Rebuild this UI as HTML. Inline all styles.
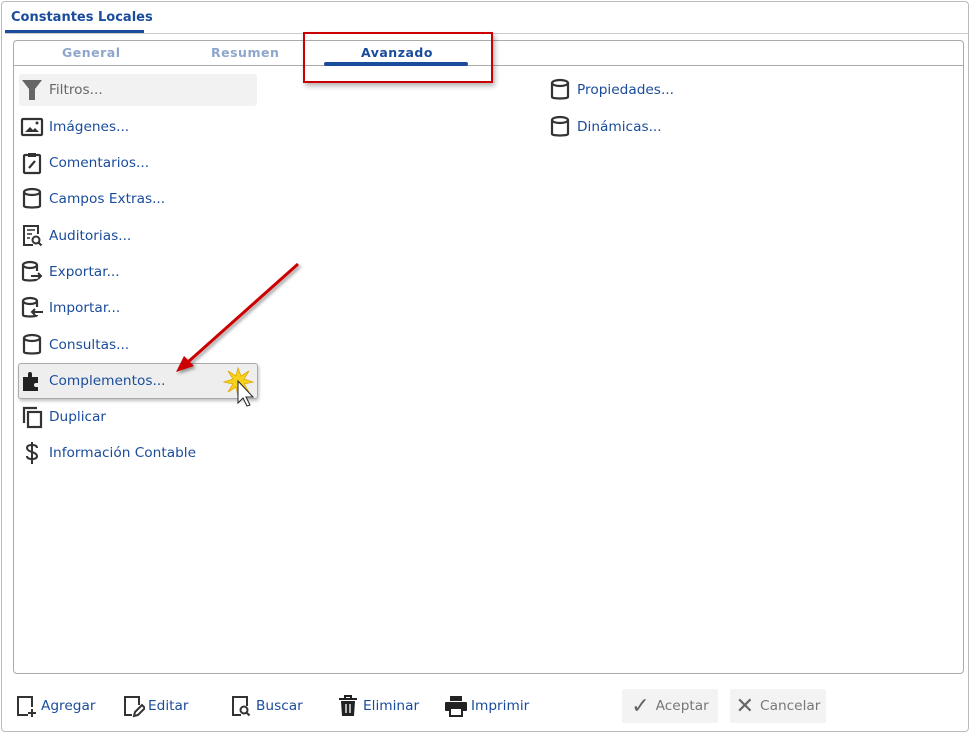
<!DOCTYPE html>
<html><head><meta charset="utf-8"><style>
body{margin:0;width:970px;height:733px;background:#fff;font-family:"DejaVu Sans","Liberation Sans",sans-serif;position:relative;overflow:hidden}
.frame{position:absolute;left:1px;top:1px;width:966px;height:729px;border:1px solid #bbb;border-radius:4px}
.ttl{position:absolute;left:11px;top:10px;font-size:13px;font-weight:bold;color:#1a4c9c}
.ttlbar{position:absolute;left:5px;top:30px;width:139px;height:3px;background:#1a4c9c}
.sep{position:absolute;left:5px;top:33px;width:963px;height:1px;background:#ccc}
.panel{position:absolute;left:13px;top:40px;width:949px;height:632px;border:1px solid #aaa;border-radius:4px}
.tabline{position:absolute;left:14px;top:65px;width:949px;height:1px;background:#aaa}
.tab{position:absolute;top:45px;font-size:12.5px;font-weight:bold;letter-spacing:0.5px}
.item{position:absolute;left:19px;height:32px;width:238px;display:flex;align-items:center;font-size:13.7px;color:#1a4c9c}
.item svg{width:24px;height:24px;margin:0 5px 0 1px;flex:none}
.btn{position:absolute;top:690px;height:32px;display:flex;align-items:center;font-size:13.7px;color:#1a4c9c}
.btn svg{width:24px;height:24px;margin-right:3px}
</style></head><body>
<div class="frame"></div>
<div class="ttl">Constantes Locales</div>
<div class="ttlbar"></div>
<div class="sep"></div>
<div class="panel"></div>
<div class="tabline"></div>
<div class="tab" style="left:62px;color:#8fa6cc">General</div>
<div class="tab" style="left:211px;color:#8fa6cc">Resumen</div>
<div class="tab" style="left:361px;color:#1a4c9c">Avanzado</div>
<div style="position:absolute;left:324px;top:62px;width:144px;height:4px;background:#1a4c9c;border-radius:2px"></div>
<div style="position:absolute;left:303px;top:32px;width:186px;height:47px;border:2px solid #c00;box-shadow:2px 3px 5px rgba(0,0,0,.3)"></div>

<div class="item" style="top:74px;background:#f2f2f2;border-radius:3px;color:#666"><svg viewBox="0 0 24 24"><path d="M2 2h20l-7 9v11h-6V11z" fill="#666"/></svg>Filtros...</div>
<div class="item" style="top:111px"><svg viewBox="0 0 24 24"><rect x="2" y="4" width="20" height="16" rx="1" fill="none" stroke="#333" stroke-width="2.2"/><path d="M5 17l5-5 3 3 2-2 4 4z" fill="#333"/><circle cx="17" cy="8" r="1.5" fill="#333"/></svg>Imágenes...</div>
<div class="item" style="top:147px"><svg viewBox="0 0 24 24"><rect x="4" y="4" width="16" height="18" rx="1" fill="none" stroke="#333" stroke-width="2.2"/><rect x="8" y="2" width="8" height="4" fill="#333"/><path d="M9 17l6-7" stroke="#333" stroke-width="2.2"/></svg>Comentarios...</div>
<div class="item" style="top:183px"><svg viewBox="0 0 24 24"><ellipse cx="12" cy="5" rx="8" ry="3" fill="none" stroke="#333" stroke-width="2.2"/><path d="M4 5v14c0 2 16 2 16 0V5" fill="none" stroke="#333" stroke-width="2.2"/></svg>Campos Extras...</div>
<div class="item" style="top:220px"><svg viewBox="0 0 24 24"><path d="M13 21H4V2h14v8" fill="none" stroke="#333" stroke-width="2"/><path d="M7 6h8M7 10h5M7 14h3" stroke="#333" stroke-width="1.6"/><circle cx="16" cy="16" r="3.5" fill="none" stroke="#333" stroke-width="2"/><path d="M18.5 18.5l3 3" stroke="#333" stroke-width="2"/></svg>Auditorias...</div>
<div class="item" style="top:256px"><svg viewBox="0 0 24 24"><ellipse cx="10" cy="5" rx="7" ry="3" fill="none" stroke="#333" stroke-width="2.2"/><path d="M3 5v14c0 2 14 2 14 0M17 5v6" fill="none" stroke="#333" stroke-width="2.2"/><path d="M11 16h10M18 13l3 3-3 3" fill="none" stroke="#333" stroke-width="2"/></svg>Exportar...</div>
<div class="item" style="top:292px"><svg viewBox="0 0 24 24"><ellipse cx="10" cy="5" rx="7" ry="3" fill="none" stroke="#333" stroke-width="2.2"/><path d="M3 5v14c0 2 14 2 14 0M17 5v6" fill="none" stroke="#333" stroke-width="2.2"/><path d="M12 16h11M15 13l-3 3 3 3" fill="none" stroke="#333" stroke-width="2"/></svg>Importar...</div>
<div class="item" style="top:329px"><svg viewBox="0 0 24 24"><ellipse cx="12" cy="5" rx="8" ry="3" fill="none" stroke="#333" stroke-width="2.2"/><path d="M4 5v14c0 2 16 2 16 0V5" fill="none" stroke="#333" stroke-width="2.2"/></svg>Consultas...</div>
<div class="item" style="top:363px;height:34px;background:#eee;border:1px solid #aaa;border-radius:3px;box-shadow:1px 2px 3px rgba(0,0,0,.25);left:18px"><svg viewBox="0 0 24 24"><path d="M3 8h5V5a2 2 0 014 0v3h6v6h-2a2 2 0 000 4h2v4H3z" fill="#222"/></svg>Complementos...</div>
<div class="item" style="top:401px"><svg viewBox="0 0 24 24"><path d="M4 18V3h13" fill="none" stroke="#333" stroke-width="2.2"/><rect x="8" y="7" width="13" height="15" fill="none" stroke="#333" stroke-width="2.2"/></svg>Duplicar</div>
<div class="item" style="top:437px"><svg viewBox="0 0 24 24"><path d="M17 7c0-2-2-3-5-3s-5 1-5 3 2 3 5 4 5 2 5 4-2 3-5 3-5-1-5-3M12 1v22" fill="none" stroke="#333" stroke-width="2"/></svg>Información Contable</div>

<div class="item" style="top:74px;left:547px"><svg viewBox="0 0 24 24"><ellipse cx="12" cy="5" rx="8" ry="3" fill="none" stroke="#333" stroke-width="2.2"/><path d="M4 5v14c0 2 16 2 16 0V5" fill="none" stroke="#333" stroke-width="2.2"/></svg>Propiedades...</div>
<div class="item" style="top:111px;left:547px"><svg viewBox="0 0 24 24"><ellipse cx="12" cy="5" rx="8" ry="3" fill="none" stroke="#333" stroke-width="2.2"/><path d="M4 5v14c0 2 16 2 16 0V5" fill="none" stroke="#333" stroke-width="2.2"/></svg>Dinámicas...</div>

<svg style="position:absolute;left:0;top:0" width="970" height="733">
<defs><filter id="s"><feDropShadow dx="2" dy="2" stdDeviation="1.5" flood-opacity=".4"/></filter></defs>
<g filter="url(#s)"><path d="M298 264L188 362" stroke="#c00" stroke-width="3"/><path d="M176 372l8-16 10 10z" fill="#c00"/></g>
<path d="M238 368l3 8 8-5-5 8 9 3-9 2 5 8-8-5-3 9-2-9-8 5 5-8-9-2 9-3-5-8 8 5z" fill="#f7d21c" stroke="#e0a800" stroke-width=".8"/>
<path d="M238 381v22l5-5 4 8 3-1-4-8h7z" fill="#fff" stroke="#222" stroke-width="1"/>
</svg>

<div class="btn" style="left:14px"><svg viewBox="0 0 24 24"><path d="M14 21H4V3h14v10" fill="none" stroke="#333" stroke-width="2"/><path d="M18 15v8M14 19h8" stroke="#333" stroke-width="2"/></svg>Agregar</div>
<div class="btn" style="left:121px"><svg viewBox="0 0 24 24"><path d="M11 21H4V3h14v8" fill="none" stroke="#333" stroke-width="2"/><path d="M13 22l1-4 7-7 3 3-7 7z" fill="none" stroke="#333" stroke-width="2"/></svg>Editar</div>
<div class="btn" style="left:229px"><svg viewBox="0 0 24 24"><path d="M12 21H4V3h14v9" fill="none" stroke="#333" stroke-width="2"/><circle cx="15" cy="16" r="3.5" fill="none" stroke="#333" stroke-width="2"/><path d="M17.5 18.5l3 3" stroke="#333" stroke-width="2"/></svg>Buscar</div>
<div class="btn" style="left:336px"><svg viewBox="0 0 24 24"><path d="M3 5h18M9 5V2h6v3" stroke="#222" stroke-width="2" fill="none"/><path d="M5 7h14l-1 15H6z" fill="#222"/><path d="M10 10v9M14 10v9" stroke="#fff" stroke-width="1.3"/></svg>Eliminar</div>
<div class="btn" style="left:444px"><svg viewBox="0 0 24 24"><rect x="6" y="2" width="12" height="5" fill="#222"/><rect x="1" y="8" width="22" height="9" rx="1" fill="#222"/><rect x="6" y="14" width="12" height="8" fill="#fff" stroke="#222" stroke-width="2"/></svg>Imprimir</div>
<div class="btn" style="left:622px;width:96px;height:34px;top:689px;background:#f3f3f3;border-radius:2px;color:#777;justify-content:center"><span style="font-size:22px;color:#666;margin-right:6px">✓</span>Aceptar</div>
<div class="btn" style="left:730px;width:96px;height:34px;top:689px;background:#f3f3f3;border-radius:2px;color:#777;justify-content:center"><span style="font-size:22px;color:#666;margin-right:6px">✕</span>Cancelar</div>
</body></html>
